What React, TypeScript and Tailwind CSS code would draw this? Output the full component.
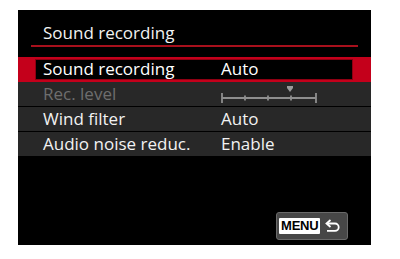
const rows = [
  { label: "Rec. level", value: null, dim: true },
  { label: "Wind filter", value: "Auto", dim: false },
  { label: "Audio noise reduc.", value: "Enable", dim: false },
];

const LevelScale = () => (
  <svg width="100" height="22" viewBox="0 0 100 22" className="mt-[1px]">
    <path d="M66 3 h6 v2 l-3 4 l-3 -4 z" fill="#9a9a9a" />
    <line x1="1" y1="15" x2="95" y2="15" stroke="#8e8e8e" strokeWidth="1.8" />
    <line x1="1" y1="10" x2="1" y2="20" stroke="#8e8e8e" strokeWidth="1.8" />
    <line x1="95" y1="10" x2="95" y2="20" stroke="#8e8e8e" strokeWidth="1.8" />
    <line x1="24" y1="12.5" x2="24" y2="17.5" stroke="#8e8e8e" strokeWidth="1.8" />
    <line x1="47" y1="12.5" x2="47" y2="17.5" stroke="#8e8e8e" strokeWidth="1.8" />
    <line x1="70" y1="12.5" x2="70" y2="17.5" stroke="#8e8e8e" strokeWidth="1.8" />
  </svg>
);

const ReturnIcon = () => (
  <svg width="17" height="14" viewBox="0 0 17 14" fill="none">
    <path d="M4 4.5 H11 a3.7 3.7 0 0 1 0 7.4 H3" stroke="#fff" strokeWidth="1.8" />
    <path d="M6.5 1 L2.5 4.5 L6.5 8" stroke="#fff" strokeWidth="1.8" strokeLinejoin="miter" />
  </svg>
);

export default function App() {
  return (
    <div
      className="w-[400px] h-[259px] bg-white pt-[10px] pl-[18px]"
      style={{ fontFamily: '"Open Sans", sans-serif' }}
    >
      <div className="w-[353px] h-[235px] bg-black flex flex-col">
        <div className="h-[35px] pl-[25px] pt-[13px] text-[17px] leading-[20px] text-[#f2f2f2]">
          Sound recording
        </div>
        <div className="mx-[13px] h-[1.5px] bg-[#a8101c]" />
        <div className="h-[10px]" />

        <div className="h-[25px] bg-[#c4001b] pl-[17px] pr-[18px] py-[2px] flex">
          <div className="flex-1 bg-black border border-[#8e0012] flex items-center text-[17px] text-white">
            <span className="w-[185px] pl-[7px]">Sound recording</span>
            <span>Auto</span>
          </div>
        </div>

        {rows.map((r) => (
          <div
            key={r.label}
            className="h-[25px] bg-[#282828] border-b border-black flex items-center pl-[25px] text-[17px] last:h-[26px]"
          >
            <span className={`w-[178px] ${r.dim ? "text-[#6e6e6e]" : "text-[#f2f2f2]"}`}>
              {r.label}
            </span>
            {r.value ? <span className="text-[#f2f2f2]">{r.value}</span> : <LevelScale />}
          </div>
        ))}

        <div className="flex-1" />
        <div className="flex justify-end pr-[23px] pb-[5px]">
          <div className="h-[28px] w-[72px] rounded-[3px] bg-[#474747] border border-[#6a6a6a] flex items-center pl-[2px] gap-[4px]">
            <div
              className="bg-white text-black text-[13px] font-bold leading-[16px] h-[16px] px-[2px] rounded-[1px] tracking-[-0.2px]"
              style={{ fontFamily: '"Liberation Sans", sans-serif' }}
            >
              MENU
            </div>
            <ReturnIcon />
          </div>
        </div>
      </div>
    </div>
  );
}
